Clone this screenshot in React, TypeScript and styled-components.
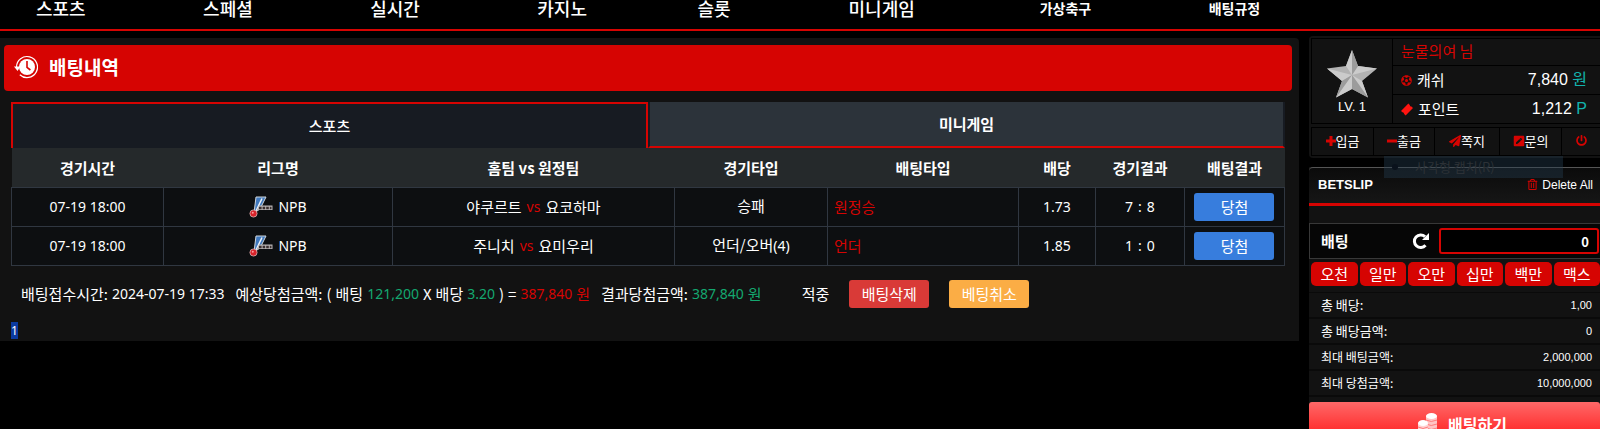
import React from "react";
import styled, { createGlobalStyle, css } from "styled-components";
import {
  FaFutbol,
  FaPaperPlane,
  FaPenSquare,
  FaPowerOff,
  FaRegTrashAlt,
} from "react-icons/fa";

const RED = "#d60402";
const GREEN = "#14a870";
const TEAL = "#12b3ad";
const PANEL = "#121212";

const Global = createGlobalStyle`
  *, *::before, *::after { box-sizing: border-box; }
  html { overflow: hidden; }
  body {
    margin: 0;
    background: #000;
    color: #fff;
    font: 15px/20px "Noto Sans CJK KR", sans-serif;
  }
  button, input { font: inherit; color: inherit; }
  button { cursor: pointer; border: 0; padding: 0; }
  a { color: inherit; text-decoration: none; }
`;

const Nav = styled.nav`
  display: grid;
  grid-template-columns: 167fr 167fr 167fr 160fr 151fr 191fr 169fr 391fr;
  height: 31px;
  padding-left: 36px;
  border-bottom: 2px solid ${RED};
`;

const NavLink = styled.a<{ $small?: boolean }>`
  font-size: ${(p) => (p.$small ? 14 : 18)}px;
  font-weight: ${(p) => (p.$small ? 700 : 500)};
  line-height: 16px;
  white-space: nowrap;
`;

const Page = styled.div`
  display: grid;
  grid-template-columns: minmax(0, 1fr) 291px;
  gap: 10px;
  align-items: start;
  padding-top: 5px;
`;

const Main = styled.main`
  margin-top: 2px;
  padding: 7px 7px 2px 4px;
  background: ${PANEL};
  border-radius: 0 4px 0 0;
`;

const Banner = styled.header`
  display: flex;
  align-items: center;
  gap: 11px;
  height: 46px;
  padding: 0 0 2px 10px;
  background: ${RED};
  border-radius: 4px;
`;

const Title = styled.h1`
  margin: 0;
  font-size: 19px;
  font-weight: 700;
  line-height: 24px;
`;

const Content = styled.section`
  padding: 11px 7px 0;
`;

const Tabs = styled.div`
  display: flex;
  background: #171b22;
`;

const Tab = styled.button<{ $active?: boolean }>`
  flex: 1;
  height: 46px;
  font-weight: 500;
  ${(p) =>
    p.$active
      ? css`
          background: #171b22;
          border: 2px solid ${RED};
          border-bottom: 0;
        `
      : css`
          background: #2c333a;
          font-weight: 700;
          border-bottom: 2px solid ${RED};
          border-left: 2px solid #171b22;
          border-right: 2px solid #171b22;
        `}
`;

const Table = styled.table`
  width: 100%;
  table-layout: fixed;
  border-collapse: collapse;
`;

const Head = styled.th`
  height: 39px;
  padding: 2px 0 0;
  background: #25292b;
  font-weight: 700;
`;

const Cell = styled.td<{ $left?: boolean }>`
  height: 39px;
  padding: 0 6px;
  background: #0d0f11;
  border: 1px solid #303741;
  text-align: ${(p) => (p.$left ? "left" : "center")};
  color: ${(p) => (p.$left ? RED : "#fff")};
  white-space: nowrap;
`;

const Latin = styled.span<{ $color?: string }>`
  font: 14px/20px "Noto Sans", "Noto Sans CJK KR", sans-serif;
  color: ${(p) => p.$color || "inherit"};
`;

const Tint = styled.span<{ $color: string }>`
  color: ${(p) => p.$color};
`;

const Match = styled.span`
  display: flex;
  align-items: center;
  justify-content: center;
  gap: 5px;
`;

const Action = styled.button<{ $bg: string }>`
  width: 80px;
  height: 28px;
  border-radius: 3px;
  background: ${(p) => p.$bg};
  color: #fff;
`;

const Summary = styled.div`
  display: flex;
  align-items: center;
  flex-wrap: wrap;
  gap: 11px;
  padding: 14px 0 0 10px;
  white-space: nowrap;
`;

const Group = styled.span`
  display: flex;
  gap: 4px;
`;

const Result = styled.span`
  margin: 0 9px 0 29px;
`;

const Actions = styled.div`
  display: flex;
  gap: 20px;
`;

const PageLink = styled.a`
  display: inline-block;
  margin-top: 14px;
  background: #0b3aa0;
  font: 12px/17px "Noto Sans", sans-serif;
  vertical-align: top;
`;

const Side = styled.aside`
  min-width: 0;
`;

const Profile = styled.section`
  position: relative;
  padding: 2px 0 2px 2px;
  background: ${PANEL};
  border-radius: 4px 0 0 4px;
`;

const ProfileTop = styled.div`
  display: grid;
  grid-template-columns: 81px 1fr;
  border: 1px solid #000;
  border-right: 0;
`;

const Level = styled.div`
  display: flex;
  flex-direction: column;
  align-items: center;
  padding-top: 11px;
  border-right: 1px solid #000;
  font: 13px/18px "Liberation Sans", sans-serif;
`;

const ProfileRow = styled.div`
  display: flex;
  align-items: center;
  gap: 5px;
  height: 29px;
  padding: 0 13px 0 8px;
  & + & { border-top: 1px solid #000; }
  &:first-child { height: 26px; padding-bottom: 2px; color: ${RED}; }
  svg { color: ${RED}; }
`;

const Amount = styled.span`
  margin-left: auto;
  font-family: "Liberation Sans", "Noto Sans CJK KR", sans-serif;
  font-size: 16px;
`;

const Menu = styled.nav`
  display: grid;
  grid-template-columns: 61px 61px 65px 62px 1fr;
  margin-top: 3px;
  border: 1px solid #000;
  border-right: 0;
`;

const MenuLink = styled.a`
  display: flex;
  align-items: center;
  justify-content: center;
  height: 27px;
  padding-bottom: 2px;
  font-size: 13px;
  & + & { border-left: 1px solid #000; }
  svg { color: ${RED}; }
`;

const Ghost = styled.div`
  position: absolute;
  left: 75px;
  top: 120px;
  display: flex;
  align-items: center;
  gap: 17px;
  width: 179px;
  height: 22px;
  padding-left: 8px;
  background: rgba(38, 62, 82, 0.4);
  color: #2c3136;
  font-size: 13px;
`;

const Dot = styled.i`
  width: 6px;
  height: 6px;
  border-radius: 50%;
  background: #0a121c;
`;

const Slip = styled.section`
  margin-top: 9px;
  background: ${PANEL};
`;

const SlipHead = styled.header`
  display: flex;
  align-items: center;
  justify-content: space-between;
  height: 39px;
  padding: 0 7px 2px 9px;
  border-top: 1px solid #555;
  border-bottom: 3px solid ${RED};
  border-radius: 4px 0 0 0;
  background: linear-gradient(#0b0b0b, #161616);
`;

const SlipTitle = styled.h2`
  margin: 0;
  font: 700 13px/18px "Liberation Sans", sans-serif;
`;

const Clear = styled.button`
  display: flex;
  align-items: center;
  gap: 4px;
  background: none;
  font: 12px/18px "Liberation Sans", sans-serif;
  svg { color: ${RED}; }
`;

const BetRow = styled.div`
  display: flex;
  align-items: center;
  height: 36px;
  margin-top: 17px;
  padding: 0 0 0 11px;
  border: 1px solid #383838;
  border-right: 0;
  background: #060606;
`;

const BetLabel = styled.label`
  font-weight: 700;
`;

const Reload = styled.button`
  display: flex;
  margin: 0 9px 0 auto;
  background: none;
`;

const BetInput = styled.input`
  width: 160px;
  height: 26px;
  margin-right: 1px;
  padding: 0 8px;
  border: 2px solid ${RED};
  border-radius: 3px;
  background: #000;
  text-align: right;
  font-size: 13px;
  font-weight: 700;
`;

const Chips = styled.div`
  display: flex;
  gap: 2px;
  padding: 3px 0 6px 2px;
`;

const Chip = styled.button`
  flex: 1;
  height: 24px;
  border-radius: 5px;
  background: ${RED};
  line-height: 20px;
`;

const Info = styled.dl`
  margin: 0;
  border-top: 1px solid #0a0a0a;
`;

const InfoRow = styled.div<{ $small?: boolean }>`
  display: flex;
  align-items: center;
  justify-content: space-between;
  height: 26px;
  padding: 0 8px 0 12px;
  border-bottom: 2px solid #0a0a0a;
  font-size: ${(p) => (p.$small ? 12 : 13)}px;
  dd { margin: 0; font: 11px/16px "Liberation Sans", sans-serif; }
`;

const Submit = styled.button`
  display: flex;
  align-items: center;
  justify-content: center;
  gap: 11px;
  width: 100%;
  height: 44px;
  margin-top: 5px;
  padding-left: 16px;
  border-radius: 3px;
  background: linear-gradient(#ff6868, #ff2222 80%);
  font-size: 16px;
  font-weight: 700;
`;

const HistoryIcon = () => (
  <svg width="24" height="24" viewBox="0 0 24 24" fill="none" aria-hidden="true">
    <circle cx="13" cy="12" r="8" fill="#fff" />
    <path d="M2.500 12A10.500 10.500 0 1 1 5.800 19.700" stroke="#fff" strokeWidth="1.200" />
    <path d="M0 11.500h6.500l-3 4.500z" fill="#fff" />
    <path d="M13 6v6.400l3.400 2.600" stroke={RED} strokeWidth="1.600" />
  </svg>
);

const NpbIcon = () => (
  <svg width="24" height="22" viewBox="0 0 24 22" aria-hidden="true">
    <path d="M7 1h10l-6 12-6 4z" fill="#3f78bd" stroke="#cfd6dc" strokeWidth="1" />
    <path d="M13 2.500 7 15" stroke="#f0f4f8" strokeWidth="1.500" />
    <path d="M10 9.500h13.500v4.500H8z" fill="#b9b5b5" />
    <path d="M10 12h12.500" stroke="#3a3030" strokeWidth="2.400" strokeDasharray="2.600 1" />
    <circle cx="4.500" cy="17.500" r="3.600" fill="#d8232a" stroke="#d9b5b5" strokeWidth=".8" />
    <circle cx="3.800" cy="16.800" r="1" fill="#ff9a9a" />
  </svg>
);

const StarIcon = () => (
  <svg width="50" height="48" viewBox="0 0 50 48" aria-hidden="true">
    <path d="M25 0 31 16 50 18.500 35 31 41 47.500 25 39 9 47.500 15 31 0 18.500 19 16z" fill="#b2b2b2" />
    <path
      d="M25 0v25l-6-9zM0 18.500 25 25 15 31zM9 47.500 25 25v14zM41 47.500 25 25l10 6zM50 18.500 25 25l6-9z"
      fill="#cbcbcb"
    />
    <path d="M25 0v25l6-9zM41 47.500 25 25v14zM9 47.500 25 25l-10 6z" fill="#9c9c9c" />
  </svg>
);

const TicketIcon = () => (
  <svg width="12" height="13" viewBox="0 0 13 13" aria-hidden="true">
    <path d="M8 0l1.500 1.500q0 1.800 1.800 1.800L13 5l-8 8-1.600-1.600q0-1.800-1.800-1.800L0 8z" fill="#ff1410" />
  </svg>
);

const PlusIcon = () => (
  <svg width="10" height="10" viewBox="0 0 10 10" aria-hidden="true">
    <path d="M3.500 0h3v3.500H10v3H6.500V10h-3V6.500H0v-3h3.500z" fill={RED} />
  </svg>
);

const MinusIcon = () => (
  <svg width="10" height="10" viewBox="0 0 10 10" aria-hidden="true">
    <path d="M0 3.500h10v3H0z" fill={RED} />
  </svg>
);

const ReloadIcon = () => (
  <svg width="18" height="18" viewBox="0 0 18 18" fill="none" aria-hidden="true">
    <path d="M13.500 13.300A6.300 6.300 0 1 1 13 4.600" stroke="#fff" strokeWidth="3" />
    <path d="M17 1v7h-7z" fill="#fff" />
  </svg>
);

const CoinsIcon = () => (
  <svg width="19" height="22" viewBox="0 0 19 22" aria-hidden="true">
    <path d="M8 3v19h11V3z" fill="#ffc4c4" />
    <path d="M8 7q5 3 11 0M8 11q5 3 11 0M8 15q5 3 11 0" stroke="#ff7b7b" fill="none" />
    <ellipse cx="13.500" cy="3" rx="5.500" ry="3" fill="#fff" />
    <path d="M0 10v12h10V10z" fill="#ffd2d2" />
    <path d="M0 14q5 3 10 0M0 18q5 3 10 0" stroke="#ff7b7b" fill="none" />
    <ellipse cx="5" cy="10" rx="5" ry="3" fill="#fff" />
  </svg>
);

const columns = [
  ["경기시간", 152],
  ["리그명", 229],
  ["홈팀 vs 원정팀", 282],
  ["경기타입", 153],
  ["배팅타입", 191],
  ["배당", 77],
  ["경기결과", 89],
  ["배팅결과", 100],
] as const;

const tableWidth = columns.reduce((sum, c) => sum + c[1], 0);

const Col = styled.col<{ $share: number }>`
  width: ${(p) => (p.$share * 100) / tableWidth}%;
`;

const bets = [
  { home: "야쿠르트", away: "요코하마", type: "승패", line: "", pick: "원정승", odds: "1.73", score: ["7", "8"] },
  { home: "주니치", away: "요미우리", type: "언더/오버", line: "(4)", pick: "언더", odds: "1.85", score: ["1", "0"] },
];

const navItems = ["스포츠", "스페셜", "실시간", "카지노", "슬롯", "미니게임", "가상축구", "배팅규정"];
const chips = ["오천", "일만", "오만", "십만", "백만", "맥스"];
const info = [
  ["총 배당:", "1,00"],
  ["총 배당금액:", "0"],
  ["최대 배팅금액:", "2,000,000"],
  ["최대 당첨금액:", "10,000,000"],
];

export default function App() {
  return (
    <>
      <Global />
      <Nav>
        {navItems.map((n, i) => (
          <NavLink key={n} href="#" $small={i > 5}>{n}</NavLink>
        ))}
      </Nav>
      <Page>
        <Main>
          <Banner>
            <HistoryIcon />
            <Title>배팅내역</Title>
          </Banner>
          <Content>
            <Tabs>
              <Tab $active>스포츠</Tab>
              <Tab>미니게임</Tab>
            </Tabs>
            <Table>
              <colgroup>
                {columns.map(([name, share]) => <Col key={name} $share={share} />)}
              </colgroup>
              <thead>
                <tr>{columns.map(([name]) => <Head key={name}>{name}</Head>)}</tr>
              </thead>
              <tbody>
                {bets.map((b) => (
                  <tr key={b.home}>
                    <Cell><Latin>07-19 18:00</Latin></Cell>
                    <Cell><Match><NpbIcon /><Latin>NPB</Latin></Match></Cell>
                    <Cell>
                      <Match>
                        <span>{b.home}</span><Latin $color={RED}>vs</Latin><span>{b.away}</span>
                      </Match>
                    </Cell>
                    <Cell>{b.type}<Latin>{b.line}</Latin></Cell>
                    <Cell $left>{b.pick}</Cell>
                    <Cell><Latin>{b.odds}</Latin></Cell>
                    <Cell>
                      <Match><Latin>{b.score[0]}</Latin><Latin>:</Latin><Latin>{b.score[1]}</Latin></Match>
                    </Cell>
                    <Cell><Action $bg="#377ddd">당첨</Action></Cell>
                  </tr>
                ))}
              </tbody>
            </Table>
            <Summary>
              <Group><span>배팅접수시간:</span><Latin>2024-07-19 17:33</Latin></Group>
              <Group>
                <span>예상당첨금액:</span><span>(</span><span>배팅</span>
                <Latin $color={GREEN}>121,200</Latin>
                <span>X</span><span>배당</span>
                <Latin $color={GREEN}>3.20</Latin>
                <span>)</span><span>=</span>
                <Latin $color={RED}>387,840</Latin><Tint $color={RED}>원</Tint>
              </Group>
              <Group>
                <span>결과당첨금액:</span>
                <Latin $color={GREEN}>387,840</Latin><Tint $color={GREEN}>원</Tint>
              </Group>
              <Result>적중</Result>
              <Actions>
                <Action $bg="#d93a37">배팅삭제</Action>
                <Action $bg="#fbad45">베팅취소</Action>
              </Actions>
            </Summary>
            <PageLink href="#">1</PageLink>
          </Content>
        </Main>
        <Side>
          <Profile>
            <ProfileTop>
              <Level><StarIcon />LV. 1</Level>
              <div>
                <ProfileRow>눈물의여 님</ProfileRow>
                <ProfileRow>
                  <FaFutbol size={11} />캐쉬
                  <Amount>7,840 <Tint $color={TEAL}>원</Tint></Amount>
                </ProfileRow>
                <ProfileRow>
                  <TicketIcon />포인트
                  <Amount>1,212 <Tint $color={TEAL}>P</Tint></Amount>
                </ProfileRow>
              </div>
            </ProfileTop>
            <Menu>
              <MenuLink href="#"><PlusIcon />입금</MenuLink>
              <MenuLink href="#"><MinusIcon />출금</MenuLink>
              <MenuLink href="#"><FaPaperPlane size={12} />쪽지</MenuLink>
              <MenuLink href="#"><FaPenSquare size={12} />문의</MenuLink>
              <MenuLink href="#" aria-label="로그아웃"><FaPowerOff size={11} /></MenuLink>
            </Menu>
            <Ghost><Dot />사각형 캡처(R)</Ghost>
          </Profile>
          <Slip>
            <SlipHead>
              <SlipTitle>BETSLIP</SlipTitle>
              <Clear><FaRegTrashAlt size={11} />Delete All</Clear>
            </SlipHead>
            <BetRow>
              <BetLabel htmlFor="stake">배팅</BetLabel>
              <Reload aria-label="초기화"><ReloadIcon /></Reload>
              <BetInput id="stake" defaultValue="0" />
            </BetRow>
            <Chips>{chips.map((c) => <Chip key={c}>{c}</Chip>)}</Chips>
            <Info>
              {info.map(([k, v], i) => (
                <InfoRow key={k} $small={i > 1}><dt>{k}</dt><dd>{v}</dd></InfoRow>
              ))}
            </Info>
            <Submit><CoinsIcon />배팅하기</Submit>
          </Slip>
        </Side>
      </Page>
    </>
  );
}
